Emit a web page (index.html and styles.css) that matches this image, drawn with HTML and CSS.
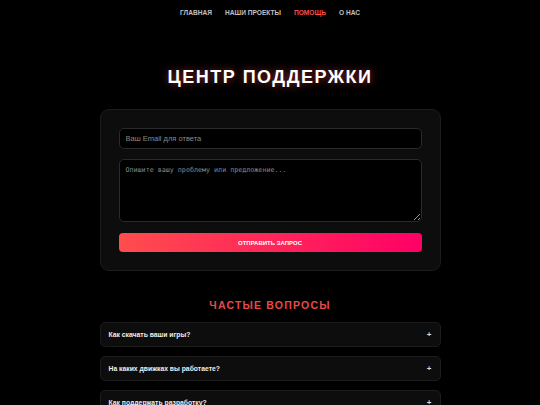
FILE: index.html
```html
<!DOCTYPE html>
<html lang="ru">
<head>
<meta charset="utf-8">
<title>Центр поддержки</title>
<link rel="stylesheet" href="styles.css">
</head>
<body>
<nav class="nav">
  <a class="nav-link" href="#">Главная</a>
  <a class="nav-link" href="#">Наши проекты</a>
  <a class="nav-link active" href="#">Помощь</a>
  <a class="nav-link" href="#">О нас</a>
</nav>
<main class="page">
  <h1 class="title">Центр поддержки</h1>
  <form class="card">
    <input class="field" type="email" placeholder="Ваш Email для ответа">
    <textarea class="field area" placeholder="Опишите вашу проблему или предложение..."></textarea>
    <button class="submit" type="button">Отправить запрос</button>
  </form>
  <h2 class="faq-title">Частые вопросы</h2>
  <div class="faq">
    <div class="faq-item"><span>Как скачать ваши игры?</span><span class="plus">+</span></div>
    <div class="faq-item"><span>На каких движках вы работаете?</span><span class="plus">+</span></div>
    <div class="faq-item"><span>Как поддержать разработку?</span><span class="plus">+</span></div>
  </div>
</main>
</body>
</html>
```
FILE: styles.css
```css
* { box-sizing: border-box; }
html, body { margin: 0; background: #000; }
body {
  font-family: "Liberation Sans", Arial, sans-serif;
  color: #fff;
  overflow: hidden;
}
.nav {
  display: flex;
  justify-content: center;
  gap: 13px;
  padding-top: 8px;
  height: 24px;
}
.nav-link {
  font-size: 6.6px;
  line-height: 9px;
  font-weight: bold;
  text-transform: uppercase;
  color: #c0c0c0;
  text-decoration: none;
}
.nav-link.active { color: #ff4d4d; }
.page {
  width: 341px;
  margin: 0 auto;
}
.title {
  margin: 42px 0 21px;
  text-align: center;
  font-size: 18px;
  font-weight: bold;
  letter-spacing: 1.5px;
  text-transform: uppercase;
  line-height: 22px;
  text-shadow: 0 0 8px rgba(255, 77, 77, 0.6);
}
.card {
  display: flex;
  flex-direction: column;
  gap: 10px;
  padding: 18px 18px 18px;
  background: #0d0d0d;
  border: 1px solid #1c1c1c;
  border-radius: 9px;
}
.field {
  display: block;
  width: 100%;
  height: 21px;
  padding: 0 6px;
  background: #000;
  border: 1px solid #2a2a2a;
  border-radius: 5px;
  color: #fff;
  font-family: "Liberation Sans", Arial, sans-serif;
  font-size: 7.5px;
  outline: none;
}
.field::placeholder { color: #8a8a8a; }
.area {
  height: 63px;
  padding: 6px 6px;
  font-family: "DejaVu Sans Mono", monospace;
  font-size: 6.7px;
  resize: vertical;
}
.submit {
  margin-top: 1px;
  height: 19px;
  border: 0;
  border-radius: 4px;
  background: linear-gradient(90deg, #ff4d4d, #ff0066);
  color: #fff;
  font-family: "Liberation Sans", Arial, sans-serif;
  font-size: 6px;
  font-weight: bold;
  text-transform: uppercase;
}
.faq-title {
  margin: 28px 0 10px;
  text-align: center;
  font-size: 10.5px;
  line-height: 13px;
  font-weight: bold;
  letter-spacing: 1.2px;
  text-transform: uppercase;
  color: #e64a4a;
}
.faq {
  display: flex;
  flex-direction: column;
  gap: 9px;
}
.faq-item {
  display: flex;
  justify-content: space-between;
  align-items: center;
  height: 25px;
  padding: 0 8px 0 8px;
  background: #0d0d0d;
  border: 1px solid #1c1c1c;
  border-radius: 5px;
  font-size: 6.8px;
  font-weight: bold;
  color: #eee;
}
.plus { font-size: 8px; color: #ddd; }
```
